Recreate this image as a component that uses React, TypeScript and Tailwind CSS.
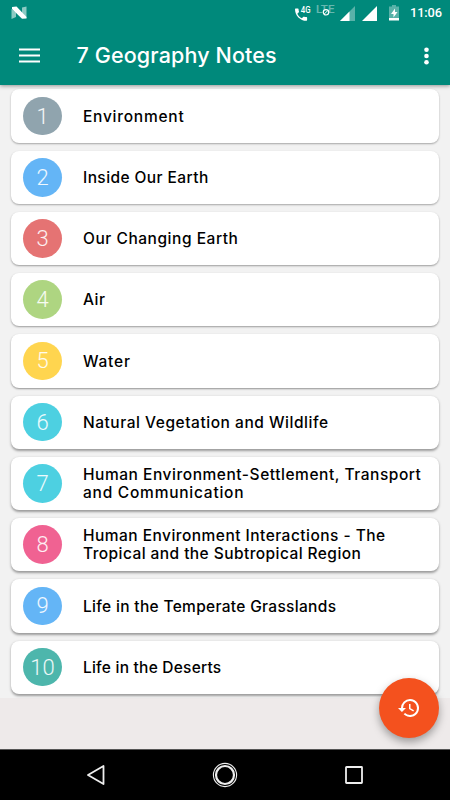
interface Chapter {
  id: number;
  lines: { text: string; tracking: string }[];
  color: string;
  shadow: string;
}

// elevation shadows get deeper towards the bottom of the screen
const chapters: Chapter[] = [
  { id: 1, color: "bg-[#90a4ae]", shadow: "shadow-[0_1px_2px_rgba(0,0,0,0.32)]", lines: [{ text: "Environment", tracking: "tracking-[0.76px]" }] },
  { id: 2, color: "bg-[#64b5f6]", shadow: "shadow-[0_1px_2px_rgba(0,0,0,0.32)]", lines: [{ text: "Inside Our Earth", tracking: "tracking-[0.42px]" }] },
  { id: 3, color: "bg-[#e57373]", shadow: "shadow-[0_1px_2px_rgba(0,0,0,0.36)]", lines: [{ text: "Our Changing Earth", tracking: "tracking-[0.54px]" }] },
  { id: 4, color: "bg-[#aed581]", shadow: "shadow-[0_1px_2px_rgba(0,0,0,0.36)]", lines: [{ text: "Air", tracking: "tracking-[0.5px]" }] },
  { id: 5, color: "bg-[#ffd54f]", shadow: "shadow-[0_1px_2px_rgba(0,0,0,0.4)]", lines: [{ text: "Water", tracking: "tracking-[0.8px]" }] },
  { id: 6, color: "bg-[#4dd0e1]", shadow: "shadow-[0_1.5px_2.5px_rgba(0,0,0,0.36)]", lines: [{ text: "Natural Vegetation and Wildlife", tracking: "tracking-[0.53px]" }] },
  {
    id: 7,
    color: "bg-[#4dd0e1]",
    shadow: "shadow-[0_1.5px_2.5px_rgba(0,0,0,0.36)]",
    lines: [
      { text: "Human Environment-Settlement, Transport", tracking: "tracking-[0.54px]" },
      { text: "and Communication", tracking: "tracking-[0.76px]" },
    ],
  },
  {
    id: 8,
    color: "bg-[#f06292]",
    shadow: "shadow-[0_1.5px_2.5px_rgba(0,0,0,0.36)]",
    lines: [
      { text: "Human Environment Interactions - The", tracking: "tracking-[0.47px]" },
      { text: "Tropical and the Subtropical Region", tracking: "tracking-[0.43px]" },
    ],
  },
  { id: 9, color: "bg-[#64b5f6]", shadow: "shadow-[0_1.5px_2.5px_rgba(0,0,0,0.36)]", lines: [{ text: "Life in the Temperate Grasslands", tracking: "tracking-[0.32px]" }] },
  { id: 10, color: "bg-[#4db6ac]", shadow: "shadow-[0_1.5px_2.5px_rgba(0,0,0,0.36)]", lines: [{ text: "Life in the Deserts", tracking: "tracking-[0.23px]" }] },
];

function StatusBar() {
  return (
    <div className="flex h-[26px] items-center text-white">
      <svg className="ml-[11px] h-[14px] w-4" viewBox="0 0 16 14">
        <path d="M0.5 3 L5 6.5 V11 L0.5 13Z M11 1.5 L15.5 0.5 V12 L11 8.5Z" fill="#fff" opacity="0.55" />
        <path d="M1 1 L5.5 0.5 L15.5 11 V12.5 L11 12.8 L1 3Z" fill="#fff" />
      </svg>
      {/* call with 4G label */}
      <svg className="ml-[268px] h-[26px] w-4" viewBox="0 0 16 26">
        <g transform="translate(0 8.5) scale(0.7)">
          <path d="M.8 0h3.400c.5 0 .9.4.9.9 0 1.200.2 2.400.6 3.500.1.300 0 .7-.2.900L3.300 7.600c1.500 2.900 3.600 5 6.500 6.500l2.200-2.200c.3-.3.600-.3.900-.2 1.100.4 2.300.6 3.500.6.500 0 .9.4.9.9v3.400c0 .5-.4.900-.9.900C7.500 17.500 0 10 0 .9 0 .4.400 0 .8 0z" fill="#fff" />
        </g>
        <text x="5.800" y="13" fill="#fff" fontFamily="Roboto, sans-serif" fontSize="8.500" fontWeight="500" textLength="9.800" lengthAdjust="spacingAndGlyphs">
          4G
        </text>
      </svg>
      <svg className="ml-[5px] h-[26px] w-5" viewBox="0 0 20 26">
        <text x="0" y="13.200" fill="#fff" opacity="0.4" fontFamily="Roboto, sans-serif" fontSize="11" fontWeight="500" textLength="18.500" lengthAdjust="spacingAndGlyphs">
          LTE
        </text>
        <circle cx="10" cy="12.300" r="2.700" fill="#00897b" stroke="#fff" strokeWidth="1.200" />
        <path d="M8.300 14 L11.700 10.600" stroke="#fff" />
      </svg>
      <svg className="ml-[4px] h-[15px] w-[15px]" viewBox="0 0 15 15">
        <path d="M0 15 L15 0 V15Z" fill="#fff" opacity="0.35" />
        <path d="M0 15 L9.500 5.500 V15Z" fill="#fff" />
      </svg>
      <svg className="ml-[7px] h-[15px] w-[15px]" viewBox="0 0 15 15">
        <path d="M0 15 L15 0 V15Z" fill="#fff" />
      </svg>
      <svg className="ml-3 h-4 w-[10px]" viewBox="0 0 10 16">
        <path d="M3 0h4v1.500h3V13H0V1.500h3z" fill="#fff" opacity="0.35" />
        <path d="M0 13h10v2.500H0z M6 3.500 L2 9h2.500v3.500L8.500 7H6z" fill="#fff" />
      </svg>
      <span className="ml-[11px] pt-px font-[Roboto,sans-serif] text-[12.8px] leading-none font-medium tracking-[-0.1px] whitespace-nowrap">
        11:06
      </span>
    </div>
  );
}

function ChapterCard({ chapter }: { chapter: Chapter }) {
  return (
    <div className={`flex h-[53.3px] shrink-0 items-center rounded-[8px] bg-white pl-[12.3px] ${chapter.shadow}`}>
      <div
        className={`flex h-[38.5px] w-[38.5px] shrink-0 items-center justify-center rounded-full font-[Roboto,sans-serif] text-[22px] font-light text-white/90 ${chapter.color}`}
      >
        {chapter.id}
      </div>
      <div className="ml-[21.2px] pt-[1.5px] text-[15.5px] leading-[18px] font-[450] text-black">
        {chapter.lines.map((line) => (
          <div key={line.text} className={`whitespace-nowrap ${line.tracking}`}>
            {line.text}
          </div>
        ))}
      </div>
    </div>
  );
}

function NavigationBar() {
  return (
    <div className="flex h-[51px] items-center justify-between border-t border-[#555] bg-black px-[86px]">
      <svg className="h-5 w-5" viewBox="0 0 20 20">
        <path d="M2 10 L17.500 1 V19Z" fill="none" stroke="#eee" strokeWidth="1.800" strokeLinejoin="round" />
      </svg>
      <svg className="h-[26px] w-[26px]" viewBox="0 0 26 26">
        <circle cx="13" cy="13" r="11.600" fill="none" stroke="#eee" strokeWidth="1.100" />
        <circle cx="13" cy="13" r="9" fill="none" stroke="#eee" strokeWidth="2.200" />
      </svg>
      <svg className="h-5 w-5" viewBox="0 0 20 20">
        <rect x="2" y="2" width="16" height="16" rx="0.500" fill="none" stroke="#eee" strokeWidth="1.800" />
      </svg>
    </div>
  );
}

export default function App() {
  return (
    <div className="relative flex h-[800px] w-[450px] flex-col overflow-hidden bg-[#eeeaea] font-[Inter,sans-serif]">
      <header className="z-10 h-[85px] shrink-0 bg-[#00897b] shadow-[0_1px_4px_rgba(0,0,0,0.4)]">
        <StatusBar />
        <div className="flex h-[59px] items-center">
          <svg className="ml-[19px] h-[15px] w-[21px]" viewBox="0 0 21 15">
            <path d="M0 1.500h21M0 7.500h21M0 13.500h21" stroke="#fff" strokeWidth="2" />
          </svg>
          <h1 className="ml-[36.5px] text-[21.5px] font-[450] tracking-[0.13px] whitespace-nowrap text-white">
            7 Geography Notes
          </h1>
          <svg className="mr-[21px] ml-auto h-[18px] w-[5px]" viewBox="0 0 5 18">
            <circle cx="2.500" cy="2.700" r="2.300" fill="#fff" />
            <circle cx="2.500" cy="9" r="2.300" fill="#fff" />
            <circle cx="2.500" cy="15.300" r="2.300" fill="#fff" />
          </svg>
        </div>
      </header>

      <main className="flex h-[613px] shrink-0 flex-col gap-[7.95px] bg-[#f2f2f2] px-[11px] pt-[4.4px]">
        {chapters.map((chapter) => (
          <ChapterCard key={chapter.id} chapter={chapter} />
        ))}
      </main>

      <div className="mt-auto">
        <NavigationBar />
      </div>

      <button className="absolute top-[678px] left-[379px] flex h-[59.5px] w-[59.5px] items-center justify-center rounded-full bg-[#f4511e] shadow-[0_4px_9px_rgba(0,0,0,0.35)]">
        <svg className="h-[24px] w-[24px]" viewBox="0 0 24 24" fill="#fff">
          <path d="M13 3a9 9 0 0 0-9 9H1l3.890 3.890.070.140L9 12H6a7 7 0 1 1 7 7 6.950 6.950 0 0 1-4.940-2.060l-1.420 1.420A9 9 0 1 0 13 3zm-1 5v5l4.280 2.540.720-1.210-3.500-2.080V8H12z" />
        </svg>
      </button>
    </div>
  );
}
